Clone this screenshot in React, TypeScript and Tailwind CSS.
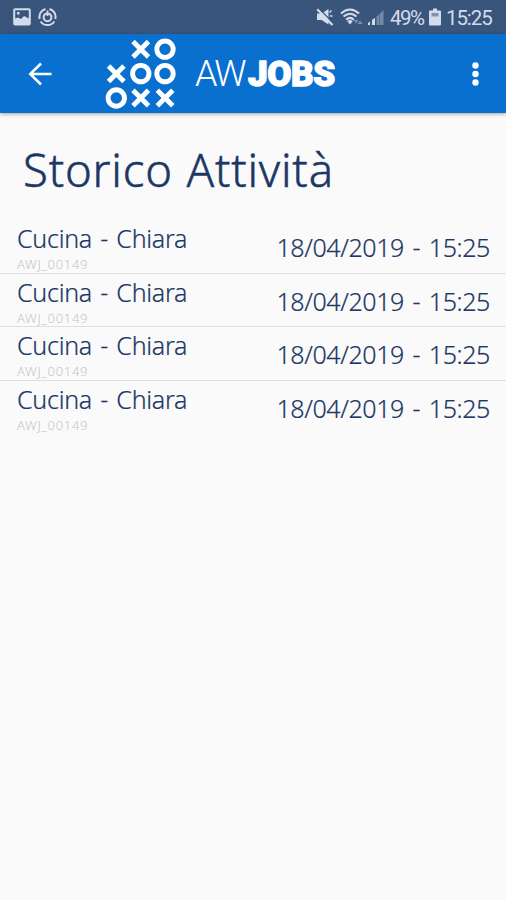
const activities = [
    { id: 1, title: "Cucina - Chiara", code: "AWJ_00149", date: "18/04/2019 - 15:25" },
    { id: 2, title: "Cucina - Chiara", code: "AWJ_00149", date: "18/04/2019 - 15:25" },
    { id: 3, title: "Cucina - Chiara", code: "AWJ_00149", date: "18/04/2019 - 15:25" },
    { id: 4, title: "Cucina - Chiara", code: "AWJ_00149", date: "18/04/2019 - 15:25" },
];

function StatusBar() {
    return (
        <div className="flex h-[34px] items-center justify-between bg-[#3a557c] pl-[13px] pr-[14px] text-[#d3dcec]">
            <div className="flex items-center gap-[7px]">
                {/* picture */}
                <svg width="18" height="18" viewBox="0 0 18 18">
                    <rect x="1.2" y="1.2" width="15.6" height="15.4" rx="1" fill="none" stroke="currentColor" strokeWidth="2" />
                    <path d="M2 10.500l3-1 3 1.500 3-3 5 2.500v6H2z" fill="currentColor" />
                    <rect x="4" y="4" width="2.500" height="2.500" fill="currentColor" />
                </svg>
                {/* sync */}
                <svg width="19" height="20" viewBox="0 0 19 20" fill="none" stroke="currentColor">
                    <path d="M11.500 2A8.200 8.200 0 0 1 17.300 12M16.300 14.500A8.200 8.200 0 0 1 2.700 14.500M1.700 12A8.200 8.200 0 0 1 7.500 2" strokeWidth="2" />
                    <circle cx="9.500" cy="10.300" r="3.900" strokeWidth="2" />
                    <path d="M9.500 3.500v5.500" strokeWidth="1.800" />
                </svg>
            </div>
            <div className="flex items-center">
                {/* muted */}
                <svg width="18" height="18" viewBox="0 0 18 18" fill="currentColor">
                    <path d="M1 5.500h4.500l7-4.500v15.500l-7-4.500H1z" />
                    <path d="M13.500 4.500l2-2M14 8h2.500" stroke="currentColor" strokeWidth="1.500" />
                    <path d="M2.500 0l15 15.500" stroke="#3a557c" strokeWidth="1.300" />
                    <path d="M1.200 1.200l15.300 15.800" stroke="currentColor" strokeWidth="2.200" />
                </svg>
                <svg className="ml-[6px]" width="23" height="18" viewBox="0 0 23 18" fill="none" stroke="currentColor" strokeWidth="2">
                    <path d="M.9 5.500Q10-2.500 19.100 5.500M3.500 8.600Q10 2.800 16.500 8.600M6.200 11.700Q10 8 13.800 11.700" />
                    <path d="M7.300 13.200L10 16.500l2.700-3.300Q10 11 7.300 13.200z" fill="currentColor" stroke="none" />
                    <path d="M13.500 12l2.500 3.500 2.500-3.500zM17.500 16l2.500-3.500 2.500 3.500z" fill="#7c90ae" stroke="none" />
                </svg>
                <svg className="ml-[4px]" width="18" height="18" viewBox="0 0 18 18">
                    <path d="M1 17v-2l2-1.500V17zM5 17v-5l3-2.300V17z" fill="currentColor" />
                    <path d="M9.500 17V8.500l2.500-2V17zM12.500 17V6l4-4v15z" fill="#7489a8" />
                </svg>
                <span className="ml-[5px] w-[34px] pt-[2px] whitespace-nowrap font-['Roboto',sans-serif] text-[20.5px] leading-none tracking-[-1.5px]">49%</span>
                <svg className="ml-[5px]" width="12" height="18" viewBox="0 0 12 18">
                    <path d="M4 .5h4V2.500h3q1 0 1 1V16.500q0 1-1 1H1q-1 0-1-1V3.500q0-1 1-1h3z" fill="currentColor" />
                    <path d="M2.500 5h7v3.500h-7z" fill="#8294b0" />
                </svg>
                <span className="ml-[5px] w-[46px] pt-[2px] whitespace-nowrap font-['Roboto',sans-serif] text-[20.5px] leading-none tracking-[-1.1px]">15:25</span>
            </div>
        </div>
    );
}

function Logo() {
    return (
        <svg width="72" height="72" viewBox="0 0 72 72" fill="none" stroke="white" strokeWidth="4.900">
            <circle cx="60" cy="11.200" r="8.200" />
            <circle cx="35.800" cy="35.600" r="8.200" />
            <circle cx="60" cy="35.600" r="8.200" />
            <circle cx="11.300" cy="60" r="8.200" />
            <path d="M28 3.500l15.500 15.500m0-15.500L28 19" />
            <path d="M3.500 28l15.500 15.500m0-15.500L3.500 43.500" />
            <path d="M28 52.200l15.500 15.500m0-15.500L28 67.700" />
            <path d="M52.300 52.200l15.500 15.500m0-15.500L52.300 67.700" />
        </svg>
    );
}

function AppBar() {
    return (
        <header className="flex h-[79px] items-center bg-[#0a70cf] pl-[28px] text-white shadow-[0_1px_4px_rgba(0,0,0,0.35)]">
            <svg width="24" height="24" viewBox="0 0 24 24" fill="none" stroke="white" strokeWidth="2.500">
                <path d="M23.500 12H2.500M13 1.500L2.200 12 13 22.500" />
            </svg>
            <div className="ml-[53px]">
                <Logo />
            </div>
            <div className="ml-[18px] flex w-[140px] items-baseline whitespace-nowrap text-[36px] leading-none">
                <span className="w-[53px] font-['Roboto',sans-serif] font-light tracking-[-2px]">AW</span>
                <span className="font-['Roboto',sans-serif] text-[35px] font-black tracking-[-0.4px] [-webkit-text-stroke:1.4px_white]">JOBS</span>
            </div>
            <svg className="ml-auto mr-[27px]" width="7" height="24" viewBox="0 0 7 24" fill="white">
                <circle cx="3.500" cy="3.500" r="3.200" />
                <circle cx="3.500" cy="12" r="3.200" />
                <circle cx="3.500" cy="20.500" r="3.200" />
            </svg>
        </header>
    );
}

export default function App() {
    return (
        <div className="min-h-[900px] w-[506px] overflow-hidden bg-[#fafafa] font-['Noto_Sans',sans-serif] text-[#1c3764]">
            <StatusBar />
            <AppBar />
            <h1 className="h-[107px] whitespace-nowrap pl-[23px] pt-[25px] text-[45.5px] font-light leading-[62px] tracking-[0.8px] [word-spacing:1px] [-webkit-text-stroke:0.5px_#1c3764]">
                Storico Attività
            </h1>
            <ul>
                {activities.map((item) => (
                    <li
                        key={item.id}
                        className="flex h-[53.5px] justify-between border-b border-[#dedede] pl-[17px] pr-[16px] last:border-b-0"
                    >
                        <div className="whitespace-nowrap pt-[3px]">
                            <p className="text-[25px] font-light leading-[30px] tracking-[-0.25px] [word-spacing:2px] [-webkit-text-stroke:0.2px_#1c3764]">{item.title}</p>
                            <p className="pt-[1px] text-[13px] font-light leading-[20px] tracking-[0.7px] text-[#c3c5ca]">{item.code}</p>
                        </div>
                        <p className="whitespace-nowrap pt-[12px] text-[25px] font-light leading-[30px] tracking-[-0.4px] [word-spacing:2.5px] [-webkit-text-stroke:0.2px_#1c3764]">{item.date}</p>
                    </li>
                ))}
            </ul>
        </div>
    );
}
